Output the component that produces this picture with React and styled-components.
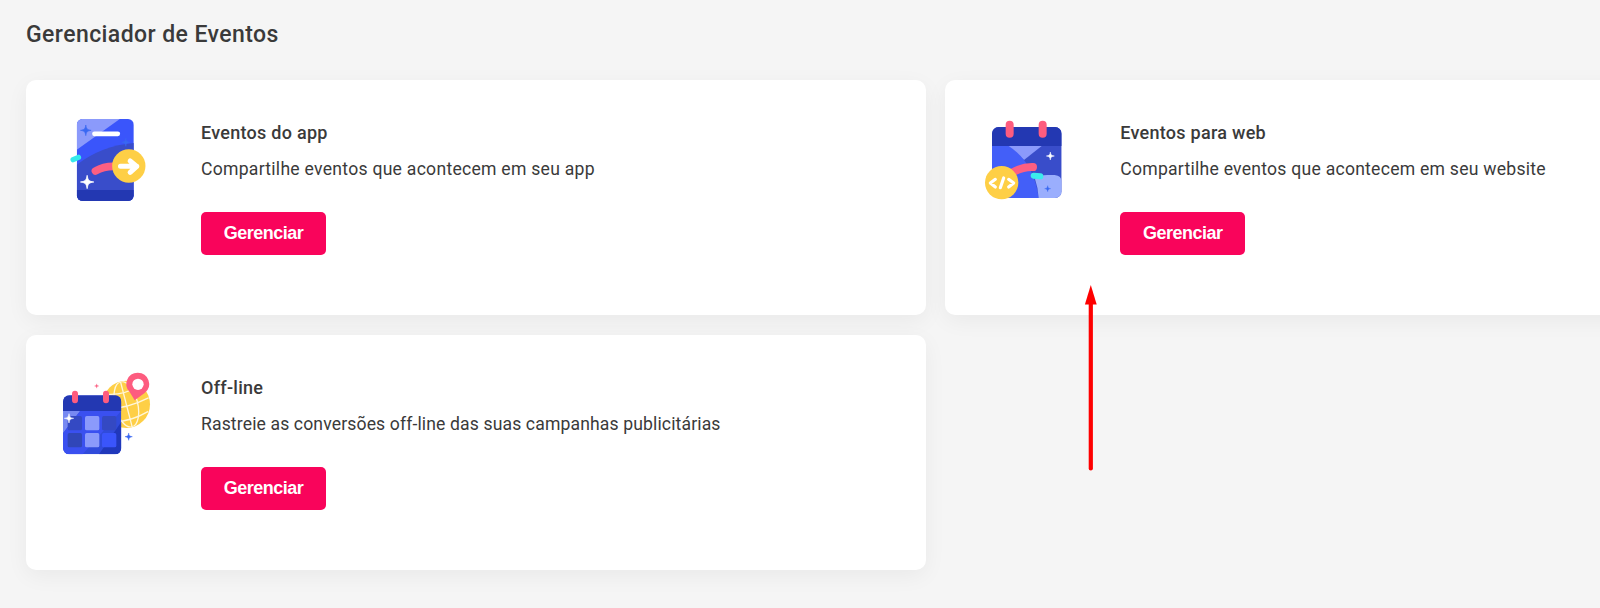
import React from "react";
import styled, { createGlobalStyle } from "styled-components";

const GlobalStyle = createGlobalStyle`
  body {
    margin: 0;
    background: #f5f5f5;
    overflow: hidden;
    font-family: Roboto, "Liberation Sans", sans-serif;
    color: #3a3a3a;
  }
`;

const Page = styled.main`
  position: relative;
  box-sizing: border-box;
  height: 608px;
  padding: 21px 0 0 26px;
  overflow: hidden;
`;

const PageTitle = styled.h1`
  margin: 0 0 31px;
  font-size: 23px;
  line-height: 28px;
  font-weight: 500;
  letter-spacing: 0.42px;
`;

const CardGrid = styled.div`
  display: grid;
  grid-template-columns: 899.5px 899.5px;
  grid-auto-rows: 235px;
  gap: 19.8px;
  row-gap: 20px;
`;

const Card = styled.section`
  box-sizing: border-box;
  display: flex;
  gap: 41px;
  padding: 30px 34px;
  border-radius: 10px;
  background: #fff;
  box-shadow: 0 6px 22px rgba(0, 0, 0, 0.05);
`;

const Art = styled.svg`
  flex: none;
  width: 100px;
  height: 100px;
`;

const CardBody = styled.div`
  display: flex;
  flex-direction: column;
  align-items: flex-start;
  padding-top: 11px;
  white-space: nowrap;
`;

const CardTitle = styled.h2`
  margin: 0;
  font-size: 18px;
  line-height: 24px;
  font-weight: 500;
  letter-spacing: 0.27px;
`;

const CardText = styled.p`
  margin: 12px 0 31px;
  font-size: 17.6px;
  line-height: 24px;
  letter-spacing: ${({ $tracking }) => $tracking}px;
`;

const ManageButton = styled.button`
  width: 125px;
  height: 43px;
  padding: 0 0 2px;
  border: 0;
  border-radius: 5px;
  background: #f9045b;
  color: #fff;
  font: bold 18px/20px "Liberation Sans", Arial, sans-serif;
  letter-spacing: -0.5px;
`;

const Arrow = styled.svg`
  position: absolute;
  left: 1084px;
  top: 285px;
  width: 14px;
  height: 188px;
`;

const Sparkle = ({ x, y, r, fill }) => (
  <path
    transform={`translate(${x} ${y}) scale(${r / 10})`}
    d="M0-10C1.2-2.6 2.6-1.2 10 0C2.6 1.2 1.2 2.6 0 10C-1.2 2.6-2.6 1.2-10 0C-2.6-1.2-1.2-2.6 0-10Z"
    fill={fill}
    stroke={fill}
    strokeWidth="1.2"
  />
);

const AppArt = () => (
  <Art viewBox="0.6 0 300 300" fill="none">
    <clipPath id="phone">
      <rect x="51" y="27" width="171" height="246" rx="17" />
    </clipPath>
    <g clipPath="url(#phone)">
      <path fill="#3a55fb" d="M51 27h171v246H51z" />
      <path fill="#8b9afb" d="M51 27h129L51 119z" />
      <path fill="#394dca" d="M51 164Q126 107 222 99V273H51z" />
      <path fill="#2338b2" d="M51 240h171v33H51z" />
    </g>
    <path d="M104 71.500H174" stroke="#fff" strokeWidth="14" strokeLinecap="round" />
    <Sparkle x="78" y="61" r="16" fill="#3968f2" />
    <Sparkle x="198" y="97" r="12" fill="#3968f2" />
    <Sparkle x="82" y="216" r="20" fill="#fff" />
    <path d="M40 149L56 142" stroke="#35eaeb" strokeWidth="16" strokeLinecap="round" />
    <path d="M107 183Q132 168 165 169" stroke="#fd5f82" strokeWidth="23" strokeLinecap="round" />
    <circle cx="207" cy="168" r="50" fill="#fecf46" />
    <path d="M182 169H231M211 153L231 169L211 187" stroke="#fff" strokeWidth="15" strokeLinecap="round" strokeLinejoin="round" />
  </Art>
);

const WebArt = () => (
  <Art viewBox="13 0 300 300" fill="none">
    <clipPath id="page">
      <rect x="52" y="51" width="209" height="213" rx="20" />
    </clipPath>
    <g clipPath="url(#page)">
      <path fill="#394dca" d="M52 51h209v213H52z" />
      <path fill="#8b9afb" d="M98 107H202L148 150z" />
      <path fill="#435ff8" d="M52 107H101Q178 157 192 264H52z" />
      <path fill="#9aaefd" d="M181 207Q196 195 218 195H240Q261 197 261 216V264H192Q190 232 181 207z" />
      <path fill="#2338b2" d="M52 51h209v57H52z" />
    </g>
    <path d="M105 44V71M204 44V71" stroke="#fd5c7f" strokeWidth="24" strokeLinecap="round" />
    <path d="M112 188Q144 170 175 171" stroke="#fd5f82" strokeWidth="24" strokeLinecap="round" />
    <path d="M177 197L197 199" stroke="#3bebec" strokeWidth="18" strokeLinecap="round" />
    <Sparkle x="227" y="138" r="12" fill="#fff" />
    <Sparkle x="219" y="236" r="9" fill="#3968f2" />
    <circle cx="81" cy="218" r="50" fill="#fecf46" />
    <path d="M62 208L47 219L62 231M102 208L117 219L102 231M87 204L77 233" stroke="#fff" strokeWidth="9.500" strokeLinecap="round" strokeLinejoin="round" />
  </Art>
);

const dayTiles = [
  [38, 153, "#3449c3"],
  [90, 153, "#8b9afb"],
  [141, 153, "#3449c3"],
  [38, 204, "#3046b8"],
  [90, 204, "#8b9afb"],
  [141, 204, "#3a55fb"],
];

const OfflineArt = () => (
  <Art viewBox="15 0 300 300" fill="none">
    <circle cx="214" cy="118" r="71" fill="#fecf46" />
    <clipPath id="globe">
      <circle cx="214" cy="118" r="70" />
    </clipPath>
    <g stroke="#fff6d9" strokeWidth="4" clipPath="url(#globe)">
      <ellipse cx="214" cy="118" rx="34" ry="70" transform="rotate(-14 214 118)" />
      <path d="M196 48L232 188M159 88Q204 91 255 63M145 132Q211 134 282 98M166 169Q220 174 280 139" />
    </g>
    <clipPath id="calendar">
      <rect x="24" y="91" width="175" height="177" rx="19" />
    </clipPath>
    <g clipPath="url(#calendar)">
      <path fill="#304bdb" d="M24 91h175v177H24z" />
      <path fill="#7789f2" d="M24 137H76L24 205z" />
      <path fill="#3a50f0" d="M76 137H199L83 268H24V205z" />
      <path fill="#2038bb" d="M199 170L132 268H199z" />
      <path fill="#2338b2" d="M24 91h175v47H24z" />
    </g>
    {dayTiles.map(([x, y, fill]) => (
      <rect key={`${x}-${y}`} x={x} y={y} width="43" height="43" rx="5" fill={fill} />
    ))}
    <path d="M60 86V106M153 86V106" stroke="#fd5c7f" strokeWidth="18" strokeLinecap="round" />
    <Sparkle x="42" y="160" r="14" fill="#fff" />
    <Sparkle x="125" y="63" r="6.500" fill="#fd5f82" />
    <Sparkle x="221" y="215" r="11" fill="#3968f2" />
    <path fill="#fd5c7f" d="M248 23A34 34 0 0 1 269 84L239 106L224 81A34 34 0 0 1 248 23Z" />
    <circle cx="249" cy="58" r="17" fill="#fff" />
  </Art>
);

const sources = [
  { art: AppArt, title: "Eventos do app", text: "Compartilhe eventos que acontecem em seu app", tracking: 0.26 },
  { art: WebArt, title: "Eventos para web", text: "Compartilhe eventos que acontecem em seu website", tracking: 0.24 },
  { art: OfflineArt, title: "Off-line", text: "Rastreie as conversões off-line das suas campanhas publicitárias", tracking: 0.125 },
];

export default function App() {
  return (
    <>
      <GlobalStyle />
      <Page>
        <PageTitle>Gerenciador de Eventos</PageTitle>
        <CardGrid>
          {sources.map(({ art: Picture, title, text, tracking }) => (
            <Card key={title}>
              <Picture />
              <CardBody>
                <CardTitle>{title}</CardTitle>
                <CardText $tracking={tracking}>{text}</CardText>
                <ManageButton>Gerenciar</ManageButton>
              </CardBody>
            </Card>
          ))}
        </CardGrid>
        <Arrow viewBox="0 0 14 188">
          <path d="M6.800 18V183.500" stroke="#fe0000" strokeWidth="4.200" strokeLinecap="round" />
          <path d="M6.800 0L12.700 19.500H0.900Z" fill="#fe0000" />
        </Arrow>
      </Page>
    </>
  );
}
